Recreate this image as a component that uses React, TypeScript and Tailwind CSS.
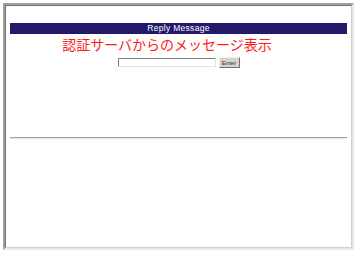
export default function App() {
  return (
    <div className="h-[255px] w-[359px] bg-white p-[3px] font-['Liberation_Sans',sans-serif]">
      <div className="flex h-[247px] w-[351px] flex-col border-2 border-t-[#a0a0a0] border-l-[#a0a0a0] border-r-[#e8e8e8] border-b-[#e8e8e8]">
        <div className="flex h-full flex-col border border-t-[#707070] border-l-[#707070] border-r-[#d4d0c8] border-b-[#d4d0c8] px-[4px] pt-[17px]">
          <div className="flex h-[11px] items-center justify-center bg-[#24186a] text-[8.5px] leading-none tracking-[0.3px] text-white">
            Reply Message
          </div>
          <div className="mt-[2px] mr-[23px] text-center font-['Noto_Sans_CJK_JP',sans-serif] text-[14px] leading-[17px] text-[#ff1a1a]">
            認証サーバからのメッセージ表示
          </div>
          <div className="mt-[4px] flex items-center justify-center gap-[3px]">
            <input
              type="text"
              className="h-[9px] w-[98px] border border-t-[#808080] border-l-[#808080] border-r-[#e0e0e0] border-b-[#e0e0e0] bg-white"
            />
            <button className="flex h-[11px] w-[21px] items-center justify-center border border-t-[#f0f0f0] border-l-[#f0f0f0] border-r-[#707070] border-b-[#707070] bg-[#d8d4cc] text-[6px] leading-none text-[#333]">
              Enter
            </button>
          </div>
          <div className="mt-[69px] h-[2px] border-t border-t-[#a0a0a0] border-b border-b-[#e8e8e8]" />
        </div>
      </div>
    </div>
  );
}
